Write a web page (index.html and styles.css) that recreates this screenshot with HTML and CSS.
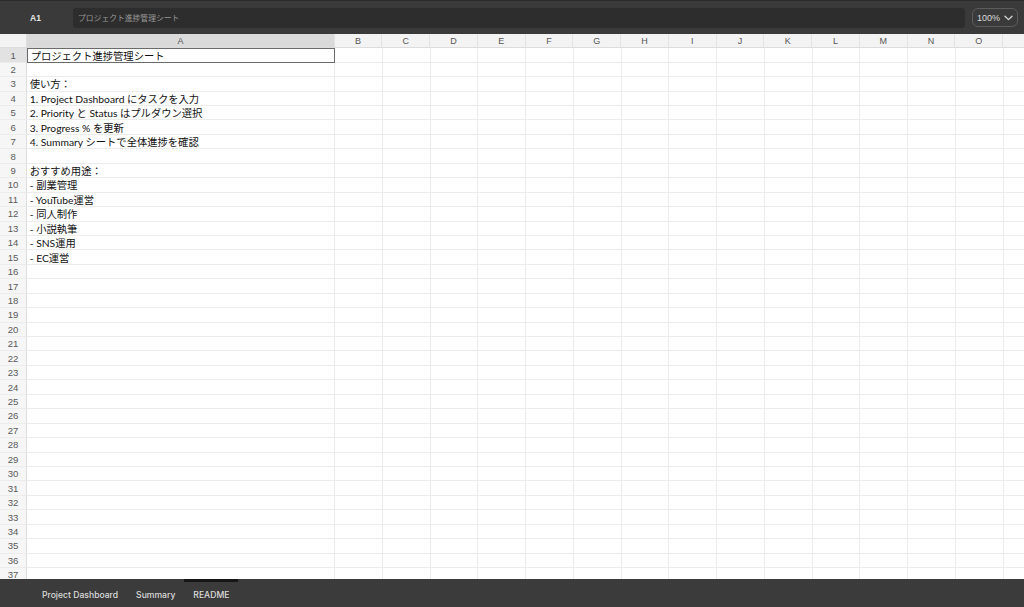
FILE: index.html
```html
<!DOCTYPE html>
<html lang="ja">
<head>
<meta charset="utf-8">
<title>README</title>
<link rel="stylesheet" href="styles.css">
</head>
<body>
<div class="app">
  <header class="topbar">
    <div class="cellref">A1</div>
    <div class="formula">プロジェクト進捗管理シート</div>
    <div class="zoom">100%
      <svg width="9" height="6" viewBox="0 0 9 6"><path d="M1 1.2 L4.5 4.6 L8 1.2" fill="none" stroke="#d8d8d8" stroke-width="1.3" stroke-linecap="round" stroke-linejoin="round"/></svg>
    </div>
  </header>

  <main class="sheet">
    <div class="row head">
      <div class="rh corner"></div>
      <div class="ch a sel">A</div>
      <div class="ch">B</div><div class="ch">C</div><div class="ch">D</div><div class="ch">E</div>
      <div class="ch">F</div><div class="ch">G</div><div class="ch">H</div><div class="ch">I</div>
      <div class="ch">J</div><div class="ch">K</div><div class="ch">L</div><div class="ch">M</div>
      <div class="ch">N</div><div class="ch">O</div><div class="ch"></div>
    </div>
    <div class="row"><div class="rh sel">1</div><div class="c a active">プロジェクト進捗管理シート</div><div class="rest"></div></div>
    <div class="row"><div class="rh">2</div><div class="c a"></div><div class="rest"></div></div>
    <div class="row"><div class="rh">3</div><div class="c a">使い方：</div><div class="rest"></div></div>
    <div class="row"><div class="rh">4</div><div class="c a">1. Project Dashboard にタスクを入力</div><div class="rest"></div></div>
    <div class="row"><div class="rh">5</div><div class="c a">2. Priority と Status はプルダウン選択</div><div class="rest"></div></div>
    <div class="row"><div class="rh">6</div><div class="c a">3. Progress % を更新</div><div class="rest"></div></div>
    <div class="row"><div class="rh">7</div><div class="c a">4. Summary シートで全体進捗を確認</div><div class="rest"></div></div>
    <div class="row"><div class="rh">8</div><div class="c a"></div><div class="rest"></div></div>
    <div class="row"><div class="rh">9</div><div class="c a">おすすめ用途：</div><div class="rest"></div></div>
    <div class="row"><div class="rh">10</div><div class="c a">- 副業管理</div><div class="rest"></div></div>
    <div class="row"><div class="rh">11</div><div class="c a">- YouTube運営</div><div class="rest"></div></div>
    <div class="row"><div class="rh">12</div><div class="c a">- 同人制作</div><div class="rest"></div></div>
    <div class="row"><div class="rh">13</div><div class="c a">- 小説執筆</div><div class="rest"></div></div>
    <div class="row"><div class="rh">14</div><div class="c a">- SNS運用</div><div class="rest"></div></div>
    <div class="row"><div class="rh">15</div><div class="c a">- EC運営</div><div class="rest"></div></div>
    <div class="row"><div class="rh">16</div><div class="c a"></div><div class="rest"></div></div>
    <div class="row"><div class="rh">17</div><div class="c a"></div><div class="rest"></div></div>
    <div class="row"><div class="rh">18</div><div class="c a"></div><div class="rest"></div></div>
    <div class="row"><div class="rh">19</div><div class="c a"></div><div class="rest"></div></div>
    <div class="row"><div class="rh">20</div><div class="c a"></div><div class="rest"></div></div>
    <div class="row"><div class="rh">21</div><div class="c a"></div><div class="rest"></div></div>
    <div class="row"><div class="rh">22</div><div class="c a"></div><div class="rest"></div></div>
    <div class="row"><div class="rh">23</div><div class="c a"></div><div class="rest"></div></div>
    <div class="row"><div class="rh">24</div><div class="c a"></div><div class="rest"></div></div>
    <div class="row"><div class="rh">25</div><div class="c a"></div><div class="rest"></div></div>
    <div class="row"><div class="rh">26</div><div class="c a"></div><div class="rest"></div></div>
    <div class="row"><div class="rh">27</div><div class="c a"></div><div class="rest"></div></div>
    <div class="row"><div class="rh">28</div><div class="c a"></div><div class="rest"></div></div>
    <div class="row"><div class="rh">29</div><div class="c a"></div><div class="rest"></div></div>
    <div class="row"><div class="rh">30</div><div class="c a"></div><div class="rest"></div></div>
    <div class="row"><div class="rh">31</div><div class="c a"></div><div class="rest"></div></div>
    <div class="row"><div class="rh">32</div><div class="c a"></div><div class="rest"></div></div>
    <div class="row"><div class="rh">33</div><div class="c a"></div><div class="rest"></div></div>
    <div class="row"><div class="rh">34</div><div class="c a"></div><div class="rest"></div></div>
    <div class="row"><div class="rh">35</div><div class="c a"></div><div class="rest"></div></div>
    <div class="row"><div class="rh">36</div><div class="c a"></div><div class="rest"></div></div>
    <div class="row"><div class="rh">37</div><div class="c a"></div><div class="rest"></div></div>
  </main>

  <footer class="tabbar">
    <div class="tab">Project Dashboard</div>
    <div class="tab">Summary</div>
    <div class="tab current">README</div>
  </footer>
</div>
</body>
</html>
```

FILE: styles.css
```css
* { box-sizing: border-box; }

html, body {
  margin: 0;
  padding: 0;
  background: #ffffff;
}

.app {
  width: 1024px;
  height: 607px;
  display: flex;
  flex-direction: column;
  overflow: hidden;
  font-family: "Liberation Sans", "Noto Sans CJK JP", sans-serif;
}

/* ---------- top bar ---------- */
.topbar {
  height: 34px;
  flex: none;
  display: flex;
  align-items: center;
  background: #3a3a3a;
  border-top: 1px solid #2a2a2a;
  padding: 0 6px 0 30px;
}

.cellref {
  width: 43px;
  flex: none;
  color: #e6e6e6;
  font-size: 8.5px;
  font-weight: bold;
}

.formula {
  flex: 1;
  height: 20px;
  display: flex;
  align-items: center;
  padding-left: 5px;
  background: #2d2d2d;
  border-radius: 3px;
  color: #9a9a9a;
  font-family: "Noto Sans CJK JP", sans-serif;
  font-size: 7.8px;
}

.zoom {
  margin-left: 7px;
  width: 46px;
  height: 19px;
  flex: none;
  display: flex;
  align-items: center;
  justify-content: center;
  gap: 4px;
  border: 1px solid #5c5c5c;
  border-radius: 6px;
  color: #dcdcdc;
  font-size: 9px;
}

/* ---------- sheet ---------- */
.sheet {
  flex: 1;
  overflow: hidden;
  background: #ffffff;
}

.row {
  display: flex;
  height: 14.44px;
}

.row.head {
  height: 14.3px;
}

.rh {
  width: 27.2px;
  flex: none;
  display: flex;
  align-items: center;
  justify-content: center;
  background: #f6f6f6;
  border-right: 1px solid #dedede;
  border-bottom: 1px solid #ececec;
  color: #5a5a5a;
  font-size: 9.6px;
}

.rh.corner {
  background: #f3f3f3;
  border-bottom: 1px solid #dcdcdc;
}

.rh.sel {
  background: #e2e2e2;
}

.ch {
  width: 47.76px;
  flex: none;
  display: flex;
  align-items: center;
  justify-content: center;
  background: #f3f3f3;
  border-right: 1px solid #e3e3e3;
  border-bottom: 1px solid #dcdcdc;
  color: #555;
  font-size: 9px;
}

.ch.a {
  width: 307.5px;
}

.ch.sel {
  background: #dadada;
}

.c {
  flex: none;
  display: flex;
  align-items: center;
  padding-left: 2.5px;
  border-right: 1px solid #ececec;
  border-bottom: 1px solid #ececec;
  color: #111;
  font-family: "Lato", "Noto Sans CJK JP", sans-serif;
  font-size: 10.3px;
  white-space: nowrap;
}

.c.a {
  width: 307.5px;
}

.c.active {
  border: 1px solid #6a6a6a;
}

.rest {
  flex: 1;
  border-bottom: 1px solid #ececec;
  background-image: repeating-linear-gradient(to right, transparent 0, transparent 46.76px, #ececec 46.76px, #ececec 47.76px);
}

/* ---------- tab bar ---------- */
.tabbar {
  height: 28px;
  flex: none;
  display: flex;
  padding-left: 33px;
  background: #3b3b3b;
}

.tab {
  display: flex;
  align-items: center;
  padding: 0 9px;
  border-top: 3px solid transparent;
  color: #dcdcdc;
  font-family: "Inter", "Liberation Sans", sans-serif;
  font-size: 8.6px;
  font-weight: 500;
}

.tab.current {
  border-top-color: #161616;
}
```
